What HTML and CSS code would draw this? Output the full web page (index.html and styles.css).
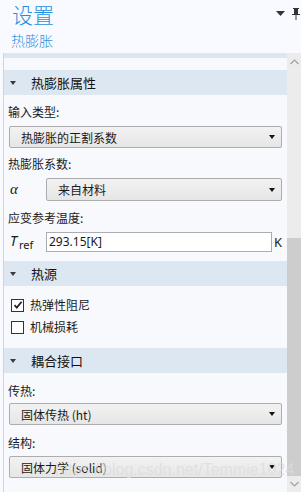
FILE: index.html
```html
<!DOCTYPE html>
<html lang="zh">
<head>
<meta charset="utf-8">
<link rel="stylesheet" href="styles.css">
</head>
<body>
<div class="app">
  <header class="top">
    <div class="title-row">
      <h1 class="title">设置</h1>
      <div class="tools">
        <svg class="tool-menu" width="9" height="5" viewBox="0 0 9 5"><path d="M0 0h9L4.5 5z" fill="#333"/></svg>
        <svg class="tool-pin" width="8" height="12" viewBox="0 0 8 12"><path d="M1 0h6v1H6v5h2v1H4.5v5h-1V7H0V6h2V1H1z" fill="#333"/></svg>
      </div>
    </div>
    <div class="subtitle">热膨胀</div>
  </header>
  <div class="main">
    <div class="panel">
      <div class="topband"></div>
      <div class="gap-area"></div>

      <div class="sec-head"><span class="tri"></span>热膨胀属性</div>
      <div class="sec-body props">
        <div class="label">输入类型:</div>
        <div class="select full"><span>热膨胀的正割系数</span><span class="arrow"></span></div>
        <div class="label">热膨胀系数:</div>
        <div class="row">
          <span class="sym alpha">α</span>
          <div class="select grow"><span>来自材料</span><span class="arrow"></span></div>
        </div>
        <div class="label tight">应变参考温度:</div>
        <div class="row last">
          <span class="sym"><i>T</i><sub>ref</sub></span>
          <div class="input">293.15[K]</div>
          <span class="unit">K</span>
        </div>
      </div>

      <div class="sec-head"><span class="tri"></span>热源</div>
      <div class="sec-body checks">
        <div class="check"><span class="box checked"><svg width="10" height="10" viewBox="0 0 10 10"><path d="M1.5 5.2l2.3 2.4L8.6 1.8" fill="none" stroke="#222" stroke-width="1.8"/></svg></span>热弹性阻尼</div>
        <div class="check"><span class="box"></span>机械损耗</div>
      </div>

      <div class="sec-head"><span class="tri"></span>耦合接口</div>
      <div class="sec-body couple">
        <div class="label first">传热:</div>
        <div class="select full first-select"><span>固体传热 (ht)</span><span class="arrow"></span></div>
        <div class="label second">结构:</div>
        <div class="select full"><span>固体力学 (solid)</span><span class="arrow"></span></div>
      </div>
    </div>
    <div class="scrollbar">
      <div class="sb-track">
        <svg class="sb-up" width="9" height="6" viewBox="0 0 9 6"><path d="M0.5 5L4.5 1l4 4" fill="none" stroke="#a0a0a0" stroke-width="1.2"/></svg>
      </div>
      <div class="sb-thumb"></div>
      <div class="sb-bottom">
        <svg class="sb-down" width="9" height="6" viewBox="0 0 9 6"><path d="M0.5 1L4.5 5l4-4" fill="none" stroke="#a0a0a0" stroke-width="1.2"/></svg>
      </div>
    </div>
  </div>
  <div class="watermark">https://blog.csdn.net/Temmie1024</div>
</div>
</body>
</html>
```

FILE: styles.css
```css
* { box-sizing: border-box; }
html, body { margin: 0; padding: 0; }
body {
  width: 301px;
  height: 492px;
  overflow: hidden;
  background: #f8faff;
  font-family: "Noto Sans CJK SC", "Noto Sans", sans-serif;
  color: #1a1a1a;
}
.app {
  position: relative;
  width: 301px;
  height: 492px;
  display: flex;
  flex-direction: column;
}
.top {
  height: 53px;
  padding: 0 1px 0 12px;
  background: #f8faff;
}
.title-row {
  display: flex;
  justify-content: space-between;
  align-items: flex-start;
}
.title {
  margin: 0;
  padding-top: 1px;
  font-size: 21px;
  line-height: 26px;
  font-weight: 300;
  color: #1e8fe0;
}
.tools {
  display: flex;
  align-items: flex-start;
  gap: 7px;
  padding-top: 8px;
}
.tool-menu { margin-top: 3px; }
.subtitle {
  margin-top: 3px;
  margin-left: -1px;
  font-size: 14px;
  line-height: 20px;
  font-weight: 300;
  color: #2b93e0;
}
.main {
  flex: 1;
  display: flex;
  min-height: 0;
}
.panel {
  flex: 1;
  margin-left: 3px;
  border-left: 1px solid #cfd3d8;
  background: #f7f9fd;
  display: flex;
  flex-direction: column;
}
.topband {
  height: 5px;
  background: #dde7f2;
}
.gap-area { height: 14px; }
.sec-head {
  height: 27px;
  background: #dde7f2;
  display: flex;
  align-items: center;
  padding-left: 6px;
  font-size: 13px;
  color: #111;
}
.tri {
  width: 0;
  height: 0;
  border-left: 3.5px solid transparent;
  border-right: 3.5px solid transparent;
  border-top: 4px solid #3a3a3a;
  margin-right: 15px;
}
.sec-body {
  padding: 8px 5px 7px 4px;
  display: flex;
  flex-direction: column;
}
.props { padding-bottom: 9px; }
.label {
  font-size: 12px;
  line-height: 18px;
  margin-bottom: 5px;
}
.label.tight { margin-bottom: 4px; }
.select {
  height: 22px;
  border: 1px solid #adadad;
  border-radius: 2px;
  background: linear-gradient(#f2f2f2, #e6e6e6);
  display: flex;
  align-items: center;
  justify-content: space-between;
  padding: 0 6px 0 11px;
  font-size: 12px;
  margin-bottom: 7px;
}
.arrow {
  width: 0;
  height: 0;
  border-left: 3.5px solid transparent;
  border-right: 3.5px solid transparent;
  border-top: 4px solid #111;
}
.full { margin-left: 1px; }
.row {
  display: flex;
  align-items: center;
  margin-bottom: 8px;
}
.row.last { margin-bottom: 0; }
.row .select { margin-bottom: 0; height: 23px; }
.grow { flex: 1; }
.sym {
  width: 38px;
  padding-left: 2px;
  font-family: "Liberation Serif", serif;
  font-size: 15px;
  font-style: italic;
}
.sym sub {
  font-family: "Noto Sans", sans-serif;
  font-style: normal;
  font-size: 11px;
  vertical-align: -3px;
  margin-left: 2px;
}
.sym i { font-family: "Noto Sans", sans-serif; font-size: 14px; }
.input {
  flex: 1;
  height: 20px;
  border: 1px solid #abadb3;
  background: #fff;
  font-family: "Noto Sans", sans-serif;
  font-size: 12px;
  line-height: 18px;
  padding-left: 2px;
}
.unit {
  width: 10px;
  text-align: right;
  font-family: "Noto Sans", sans-serif;
  font-size: 13px;
  color: #222;
}
.checks { padding: 12px 5px 14px 7px; gap: 8px; }
.couple { padding-top: 9px; }
.couple .label.first { margin-bottom: 3px; }
.couple .first-select { margin-bottom: 9px; }
.couple .label.second { margin-bottom: 4px; }
.check {
  display: flex;
  align-items: center;
  font-size: 12px;
  line-height: 14px;
}
.box {
  width: 13px;
  height: 13px;
  border: 1px solid #333;
  background: #fff;
  margin-right: 6px;
  display: flex;
  align-items: center;
  justify-content: center;
}
.scrollbar {
  width: 14px;
  display: flex;
  flex-direction: column;
}
.sb-track {
  height: 185px;
  background: #ececec;
  display: flex;
  justify-content: center;
  padding-top: 6px;
}
.sb-thumb {
  height: 238px;
  background: #cdcdcd;
}
.sb-bottom {
  flex: 1;
  background: #ececec;
  display: flex;
  justify-content: center;
  padding-top: 5px;
}
.watermark {
  position: absolute;
  left: 55px;
  top: 461px;
  font-family: "Liberation Sans", sans-serif;
  font-size: 16px;
  color: rgba(220, 220, 220, 0.75);
  white-space: nowrap;
  pointer-events: none;
}
```
